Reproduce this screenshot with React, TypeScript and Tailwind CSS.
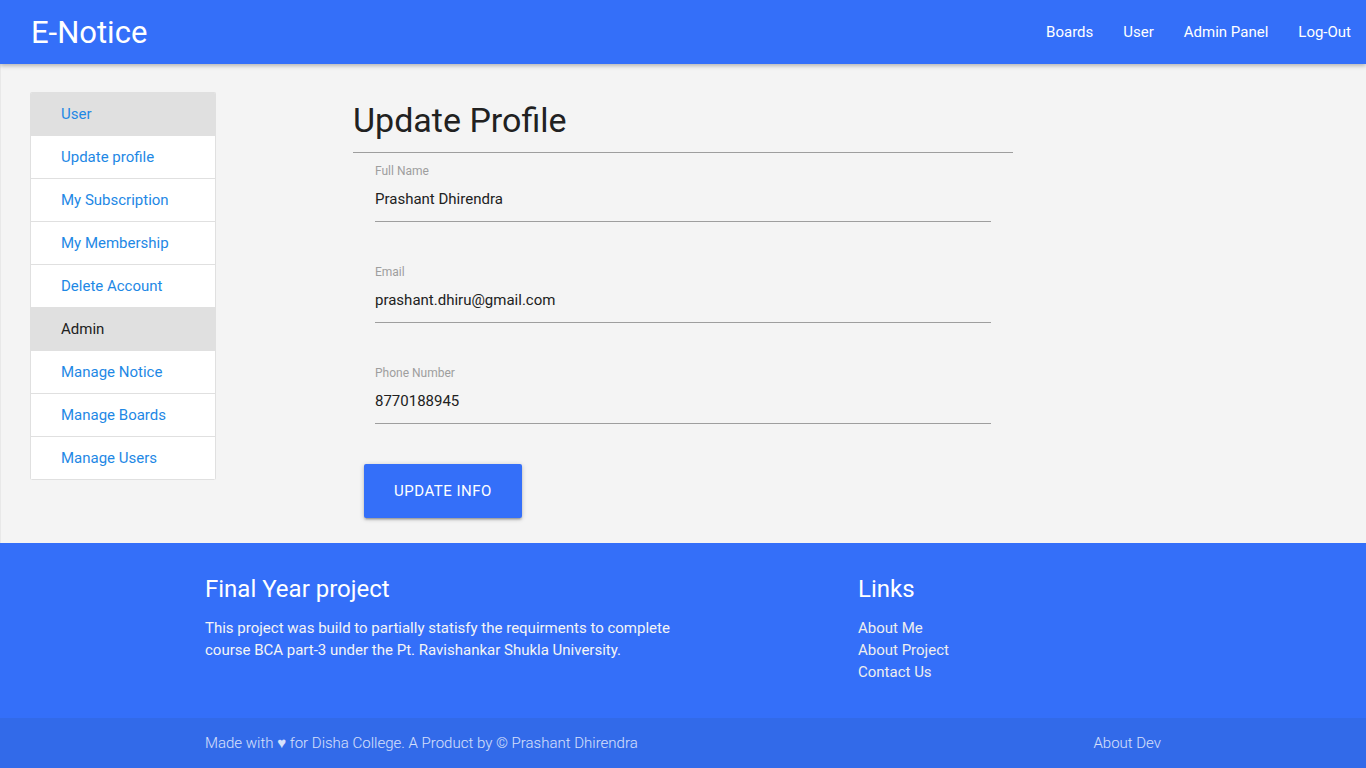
import React from "react";

const font = { fontFamily: "Roboto, 'Noto Sans', sans-serif" };

function Field({ label, value }: { label: string; value: string }) {
  return (
    <div className="h-[101px] pt-[11px]">
      <div className="text-[12px] leading-[14px] text-[#9e9e9e]">{label}</div>
      <div className="mt-[12px] text-[15px] leading-[18px] text-[#212121]">{value}</div>
      <div className="mt-[13px] h-px bg-[#9e9e9e]" />
    </div>
  );
}

function SideItem({ text, header, dark }: { text: string; header?: boolean; dark?: boolean }) {
  return (
    <div
      className={`h-[43px] flex items-center pl-[30px] border-b border-[#e0e0e0] text-[15px] ${
        header ? "bg-[#e0e0e0]" : "bg-white"
      } ${dark ? "text-[#212121]" : "text-[#1e88e5]"}`}
    >
      {text}
    </div>
  );
}

export default function App() {
  return (
    <div style={font} className="min-h-[768px] bg-[#f4f4f4] flex flex-col">
      <nav className="h-16 bg-[#346ff9] flex items-center justify-between pl-[31px] pr-0 shadow-[0_2px_4px_rgba(0,0,0,0.25)] relative z-10">
        <div className="text-[31px] text-white leading-none">E-Notice</div>
        <div className="flex text-[15px] text-white">
          <span className="px-[15px]">Boards</span>
          <span className="px-[15px]">User</span>
          <span className="px-[15px]">Admin Panel</span>
          <span className="px-[15px]">Log-Out</span>
        </div>
      </nav>

      <main className="flex pt-7 pb-[25px] border-l border-[#e8e8e8]">
        <div className="ml-[29px] w-[186px] self-start border border-b-0 border-[#e0e0e0] rounded-[2px] overflow-hidden">
          <SideItem text="User" header />
          <SideItem text="Update profile" />
          <SideItem text="My Subscription" />
          <SideItem text="My Membership" />
          <SideItem text="Delete Account" />
          <SideItem text="Admin" header dark />
          <SideItem text="Manage Notice" />
          <SideItem text="Manage Boards" />
          <SideItem text="Manage Users" />
        </div>

        <div className="ml-[137px] w-[660px]">
          <h1 className="text-[34px] leading-[48px] text-[#212121] pt-[4px] h-[60px]">Update Profile</h1>
          <div className="h-px bg-[#9e9e9e]" />
          <div className="px-[22px]">
            <Field label="Full Name" value="Prashant Dhirendra" />
            <Field label="Email" value="prashant.dhiru@gmail.com" />
            <Field label="Phone Number" value="8770188945" />
          </div>
          <button className="ml-[11px] mt-[8px] h-[54px] w-[158px] rounded-[2px] bg-[#346ff9] text-white text-[15px] uppercase tracking-[0.5px] shadow-[0_2px_2px_rgba(0,0,0,0.14),0_3px_1px_-2px_rgba(0,0,0,0.12),0_1px_5px_rgba(0,0,0,0.2)]">
            Update Info
          </button>
        </div>
      </main>

      <footer className="bg-[#346ff9] text-white">
        <div className="w-[956px] mx-auto grid grid-cols-[653px_1fr] pt-[31px] h-[175px]">
          <div>
            <h5 className="text-[24px] leading-[30px]">Final Year project</h5>
            <p className="mt-[13px] text-[15px] leading-[22px] text-[#f5f5f5] w-[480px]">
              This project was build to partially statisfy the requirments to complete course BCA part-3 under the Pt. Ravishankar Shukla University.
            </p>
          </div>
          <div>
            <h5 className="text-[24px] leading-[30px]">Links</h5>
            <ul className="mt-[13px] text-[15px] leading-[22px] text-[#eeeeee]">
              <li>About Me</li>
              <li>About Project</li>
              <li>Contact Us</li>
            </ul>
          </div>
        </div>
        <div className="bg-[#326ae9] h-[50px]">
          <div className="w-[956px] mx-auto h-full flex items-center justify-between text-[15px] font-light text-white/80">
            <span>Made with ♥ for Disha College. A Product by © Prashant Dhirendra</span>
            <span>About Dev</span>
          </div>
        </div>
      </footer>
    </div>
  );
}
